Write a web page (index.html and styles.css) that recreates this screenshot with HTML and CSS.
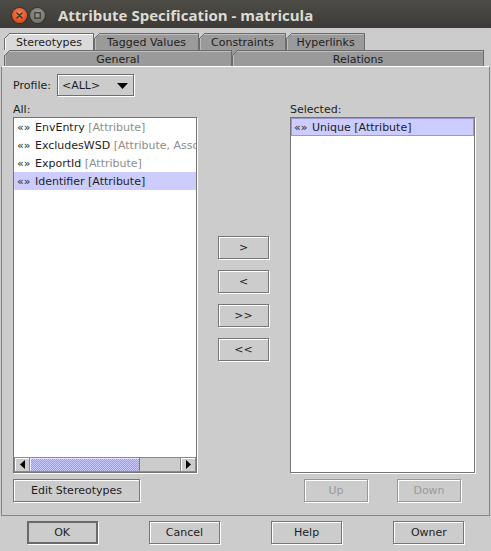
FILE: index.html
```html
<!DOCTYPE html>
<html>
<head>
<meta charset="utf-8">
<title>Attribute Specification - matricula</title>
<link rel="stylesheet" href="styles.css">
</head>
<body>
<div class="window">
  <header class="titlebar">
    <div class="wm-buttons">
      <span class="wm-btn wm-close">
        <svg width="7" height="7" viewBox="0 0 7 7"><path d="M1 1 L6 6 M6 1 L1 6" stroke="#3c3b37" stroke-width="1.6" stroke-linecap="round"/></svg>
      </span>
      <span class="wm-btn wm-min">
        <svg width="7" height="7" viewBox="0 0 7 7"><rect x="0.75" y="0.75" width="5.5" height="5.5" fill="none" stroke="#3c3b37" stroke-width="1.3"/></svg>
      </span>
    </div>
    <div class="title">Attribute Specification - matricula</div>
  </header>

  <div class="dialog">
    <div class="tabs">
      <div class="tab-row tab-row-back">
        <div class="tab tab-selected tab-stereotypes">Stereotypes</div>
        <div class="tab tab-tagged">Tagged Values</div>
        <div class="tab tab-constraints">Constraints</div>
        <div class="tab tab-hyperlinks">Hyperlinks</div>
      </div>
      <div class="tab-row tab-row-front">
        <div class="tab tab-general">General</div>
        <div class="tab tab-relations">Relations</div>
      </div>
    </div>

    <div class="panel">
      <div class="profile-row">
        <span class="field-label">Profile:</span>
        <div class="combo">
          <span class="combo-value">&lt;ALL&gt;</span>
          <svg class="combo-arrow" width="11" height="6" viewBox="0 0 11 6"><path d="M0 0 H11 L5.5 6 Z" fill="#000"/></svg>
        </div>
      </div>

      <div class="columns">
        <div class="col col-left">
          <div class="col-label">All:</div>
          <div class="listbox">
            <ul class="list">
              <li class="item"><span class="stereo-icon">«»</span>EnvEntry <span class="meta">[Attribute]</span></li>
              <li class="item"><span class="stereo-icon">«»</span>ExcludesWSD <span class="meta">[Attribute, Association]</span></li>
              <li class="item"><span class="stereo-icon">«»</span>ExportId <span class="meta">[Attribute]</span></li>
              <li class="item item-selected"><span class="stereo-icon">«»</span>Identifier [Attribute]</li>
            </ul>
            <div class="hscroll">
              <div class="sb-btn">
                <svg width="5" height="9" viewBox="0 0 5 9"><path d="M5 0 V9 L0 4.5 Z" fill="#000"/></svg>
              </div>
              <div class="sb-track">
                <div class="sb-thumb" style="width:73%"></div>
              </div>
              <div class="sb-btn">
                <svg width="5" height="9" viewBox="0 0 5 9"><path d="M0 0 V9 L5 4.5 Z" fill="#000"/></svg>
              </div>
            </div>
          </div>
          <div class="col-actions col-actions-left">
            <button class="btn btn-edit">Edit Stereotypes</button>
          </div>
        </div>

        <div class="col-mid">
          <button class="btn btn-move">&gt;</button>
          <button class="btn btn-move">&lt;</button>
          <button class="btn btn-move">&gt;&gt;</button>
          <button class="btn btn-move">&lt;&lt;</button>
        </div>

        <div class="col col-right">
          <div class="col-label">Selected:</div>
          <div class="listbox">
            <ul class="list">
              <li class="item item-selected item-focus"><span class="stereo-icon">«»</span>Unique [Attribute]</li>
            </ul>
          </div>
          <div class="col-actions col-actions-right">
            <button class="btn btn-order btn-disabled">Up</button>
            <button class="btn btn-order btn-disabled">Down</button>
          </div>
        </div>
      </div>
    </div>

    <div class="footer">
      <div class="footer-cell"><button class="btn btn-footer btn-default">OK</button></div>
      <div class="footer-cell"><button class="btn btn-footer">Cancel</button></div>
      <div class="footer-cell"><button class="btn btn-footer">Help</button></div>
      <div class="footer-cell"><button class="btn btn-footer">Owner</button></div>
    </div>
  </div>
</div>
</body>
</html>
```

FILE: styles.css
```css
* {
  box-sizing: border-box;
}

html,
body {
  margin: 0;
  padding: 0;
  background: #3c3b37;
}

body {
  width: 491px;
  height: 551px;
  overflow: hidden;
  font-family: "DejaVu Sans", "Liberation Sans", sans-serif;
  font-size: 11px;
  color: #1e1e1e;
}

.window {
  width: 491px;
  height: 551px;
  display: flex;
  flex-direction: column;
  background: #cccccc;
}

/* ---------- title bar ---------- */
.titlebar {
  height: 28px;
  flex: none;
  display: flex;
  align-items: center;
  background: linear-gradient(#4d4c47, #3c3b37);
}

.wm-buttons {
  display: flex;
  gap: 3px;
  margin-left: 12px;
  margin-top: 3px;
}

.wm-btn {
  width: 15px;
  height: 15px;
  border-radius: 50%;
  display: flex;
  align-items: center;
  justify-content: center;
}

.wm-close {
  background: radial-gradient(circle at 50% 35%, #f7875a 0, #e95420 60%, #c94414 100%);
  box-shadow: 0 0 0 1px rgba(0, 0, 0, 0.25);
}

.wm-min {
  background: radial-gradient(circle at 50% 35%, #9a9893 0, #7c7a75 60%, #66645f 100%);
  box-shadow: 0 0 0 1px rgba(0, 0, 0, 0.25);
}

.title {
  margin-left: 13px;
  margin-top: 2px;
  color: #dfdbd2;
  font-family: "Open Sans", "DejaVu Sans", sans-serif;
  font-weight: 700;
  font-size: 15px;
  white-space: nowrap;
}

/* ---------- dialog ---------- */
.dialog {
  flex: 1;
  display: flex;
  flex-direction: column;
  padding-top: 5px;
}

/* ---------- tabs ---------- */
.tabs {
  margin-left: 4px;
  width: 480px;
}

.tab-row {
  display: flex;
}

.tab-row-back {
  height: 17px;
}

.tab-row-front {
  height: 16px;
}

.tab {
  --corner: #cccccc;
  position: relative;
  display: flex;
  align-items: center;
  justify-content: center;
  border: 1px solid #6c6c6c;
  border-bottom: none;
  background: #9a9a9a;
  box-shadow: inset 1px 1px 0 #bdbdbd;
  white-space: nowrap;
  padding-top: 1px;
}

.tab::before {
  content: "";
  position: absolute;
  top: -1px;
  left: -1px;
  width: 6px;
  height: 6px;
  background: linear-gradient(to bottom right,
      var(--corner) 0 calc(50% - 0.6px),
      #6c6c6c calc(50% - 0.6px) calc(50% + 0.6px),
      transparent calc(50% + 0.6px));
}

.tab-selected {
  background: #dadada;
  box-shadow: inset 1px 1px 0 #ffffff;
}

.tab-stereotypes { width: 90px; }
.tab-tagged { width: 105px; }
.tab-constraints { width: 87px; }
.tab-hyperlinks { width: 79px; }

.tab-general {
  width: 228px;
  --corner: #dadada;
}

.tab-relations {
  flex: 1;
  --corner: #9a9a9a;
}

/* ---------- main panel ---------- */
.panel {
  height: 450px;
  margin: 0 1px;
  border: 1px solid #868686;
  border-top-color: #ffffff;
  padding: 7px 14px 0 11px;
  display: flex;
  flex-direction: column;
}

.profile-row {
  height: 22px;
  display: flex;
  align-items: center;
}

.field-label {
  margin-right: 6px;
}

.combo {
  width: 77px;
  height: 22px;
  display: flex;
  align-items: center;
  justify-content: space-between;
  padding: 0 5px 0 4px;
  border: 1px solid #6e6e6e;
  box-shadow: inset 1px 1px 0 #ffffff, 1px 1px 0 #ffffff;
  background: #cccccc;
}

.combo-arrow {
  margin-top: 1px;
}

.columns {
  flex: 1;
  display: flex;
  margin-top: 6px;
  margin-bottom: 13px;
}

.col {
  display: flex;
  flex-direction: column;
}

.col-left {
  width: 184px;
}

.col-right {
  width: 185px;
}

.col-label {
  height: 15px;
  line-height: 15px;
}

.listbox {
  flex: 1;
  display: flex;
  flex-direction: column;
  background: #ffffff;
  border: 1px solid #747474;
  box-shadow: 1px 1px 0 #ffffff;
  overflow: hidden;
}

.list {
  flex: 1;
  list-style: none;
  margin: 0;
  padding: 0;
}

.item {
  height: 18px;
  display: flex;
  align-items: center;
  padding-left: 3px;
  white-space: pre;
}

.item-selected {
  background: #ccccff;
}

.item-focus {
  box-shadow: inset 0 0 0 1px #9999cc;
}

.stereo-icon {
  width: 18px;
  flex: none;
}

.meta {
  color: #8e8e8e;
}

/* horizontal scrollbar */
.hscroll {
  height: 15px;
  display: flex;
  background: #cccccc;
}

.sb-btn {
  width: 16px;
  flex: none;
  display: flex;
  align-items: center;
  justify-content: center;
  border: 1px solid #8a8a8a;
  box-shadow: inset 1px 1px 0 #ffffff;
  background: #cccccc;
}

.sb-track {
  flex: 1;
  border-top: 1px solid #8a8a8a;
  border-bottom: 1px solid #8a8a8a;
}

.sb-thumb {
  height: 100%;
  border-right: 1px solid #7777aa;
  background-color: #ccccff;
  background-image: repeating-conic-gradient(#9c9ccc 0 25%, #ccccff 0 50%);
  background-size: 2px 2px;
  box-shadow: inset 1px 1px 0 #e6e6ff;
}

.col-actions {
  display: flex;
  margin-top: 6px;
}

.col-actions-right {
  justify-content: center;
  gap: 29px;
}

.col-mid {
  width: 51px;
  margin: 0 21px;
  display: flex;
  flex-direction: column;
  gap: 11px;
  padding-top: 134px;
}

/* ---------- buttons ---------- */
.btn {
  height: 23px;
  padding: 0;
  font-family: "DejaVu Sans", "Liberation Sans", sans-serif;
  font-size: 11px;
  color: #1e1e1e;
  background: #cccccc;
  border: 1px solid #767676;
  box-shadow: inset 1px 1px 0 #ffffff, 1px 1px 0 #ffffff;
  border-radius: 0;
}

.btn-edit {
  width: 127px;
}

.btn-move {
  width: 51px;
}

.btn-order {
  width: 64px;
}

.btn-disabled {
  color: #999999;
  border-color: #999999;
}

.btn-footer {
  width: 71px;
}

.btn-default {
  border: 2px solid #6a6a6a;
  box-shadow: 1px 1px 0 #ffffff;
}

/* ---------- footer ---------- */
.footer {
  display: grid;
  grid-template-columns: repeat(4, 1fr);
  margin: 0 1px;
  padding-top: 5px;
}

.footer-cell {
  display: flex;
  justify-content: center;
}
```
